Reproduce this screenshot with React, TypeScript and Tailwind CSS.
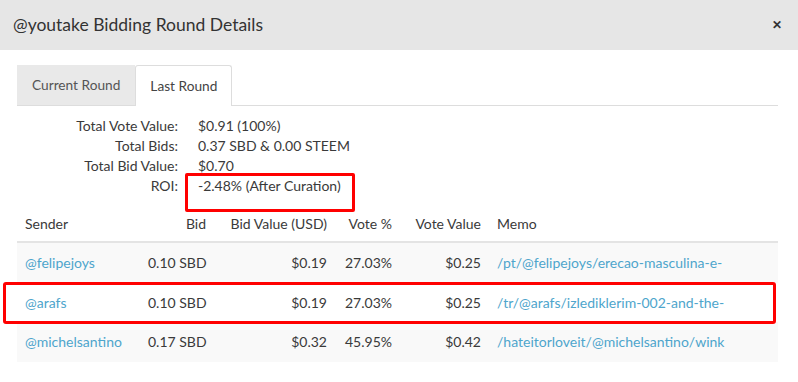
import React from "react";

const rows = [
  { sender: "@felipejoys", bid: "0.10 SBD", bidValue: "$0.19", votePct: "27.03%", voteValue: "$0.25", memo: "/pt/@felipejoys/erecao-masculina-e-", bg: "bg-[#f9f9f9]" },
  { sender: "@arafs", bid: "0.10 SBD", bidValue: "$0.19", votePct: "27.03%", voteValue: "$0.25", memo: "/tr/@arafs/izlediklerim-002-and-the-", bg: "bg-white" },
  { sender: "@michelsantino", bid: "0.17 SBD", bidValue: "$0.32", votePct: "45.95%", voteValue: "$0.42", memo: "/hateitorloveit/@michelsantino/wink", bg: "bg-[#f9f9f9]" },
];

const cols = "grid grid-cols-[123px_74px_121px_65px_89px_1fr]";

export default function App() {
  return (
    <div
      className="relative w-[798px] h-[382px] bg-white text-[#3a3a3a] text-[14px] overflow-hidden"
      style={{ fontFamily: "Lato, 'Open Sans', Arial, sans-serif" }}
    >
      <div className="h-[50px] bg-[#e6e6e6] flex items-center justify-between pl-[13px] pr-[16px]">
        <div className="text-[17.5px] text-[#333]">@youtake Bidding Round Details</div>
        <div className="text-[12px] font-bold text-[#333] leading-none">✕</div>
      </div>

      <div className="pl-[17px] pr-[20px] pt-[15px]">
        <div className="flex border-b border-[#ddd] h-[41px]">
          <div className="px-[14px] flex items-center bg-[#e9e9e9] text-[#555] border border-transparent border-b-0 text-[13.7px]">Current Round</div>
          <div className="px-[14px] flex items-center bg-white text-[#444] border border-[#ddd] border-b-0 rounded-t-[3px] -mb-px text-[13.7px]">Last Round</div>
        </div>

        <div className="mt-[10px] grid grid-cols-[161px_1fr] gap-x-[20px] leading-[20px]">
          <div className="text-right">Total Vote Value:</div>
          <div>$0.91 (100%)</div>
          <div className="text-right">Total Bids:</div>
          <div>0.37 SBD &amp; 0.00 STEEM</div>
          <div className="text-right">Total Bid Value:</div>
          <div>$0.70</div>
          <div className="text-right">ROI:</div>
          <div>-2.48% (After Curation)</div>
        </div>

        <div className="mt-[9px]">
          <div className={`${cols} h-[38px] items-center border-b-2 border-[#e4e4e4]`}>
            <div className="px-2">Sender</div>
            <div className="px-2 text-right">Bid</div>
            <div className="px-2 text-right">Bid Value (USD)</div>
            <div className="px-2 text-right">Vote %</div>
            <div className="px-2 text-right">Vote Value</div>
            <div className="px-2">Memo</div>
          </div>
          {rows.map((r) => (
            <div key={r.sender} className={`${cols} h-[39.5px] items-center ${r.bg}`}>
              <div className="px-2 text-[#4ea5cc] whitespace-nowrap">{r.sender}</div>
              <div className="px-2 text-right whitespace-nowrap">{r.bid}</div>
              <div className="px-2 text-right">{r.bidValue}</div>
              <div className="px-2 text-right">{r.votePct}</div>
              <div className="px-2 text-right">{r.voteValue}</div>
              <div className="px-2 text-[#4ea5cc] whitespace-nowrap overflow-hidden">{r.memo}</div>
            </div>
          ))}
        </div>
      </div>

      <div className="absolute left-[185px] top-[173px] w-[170px] h-[39px] border-[3px] border-[#ff0000] rounded-[2px]" />
      <div className="absolute left-[3px] top-[282px] w-[773px] h-[42px] border-[3px] border-[#ff0000] rounded-[3px]" />
    </div>
  );
}
